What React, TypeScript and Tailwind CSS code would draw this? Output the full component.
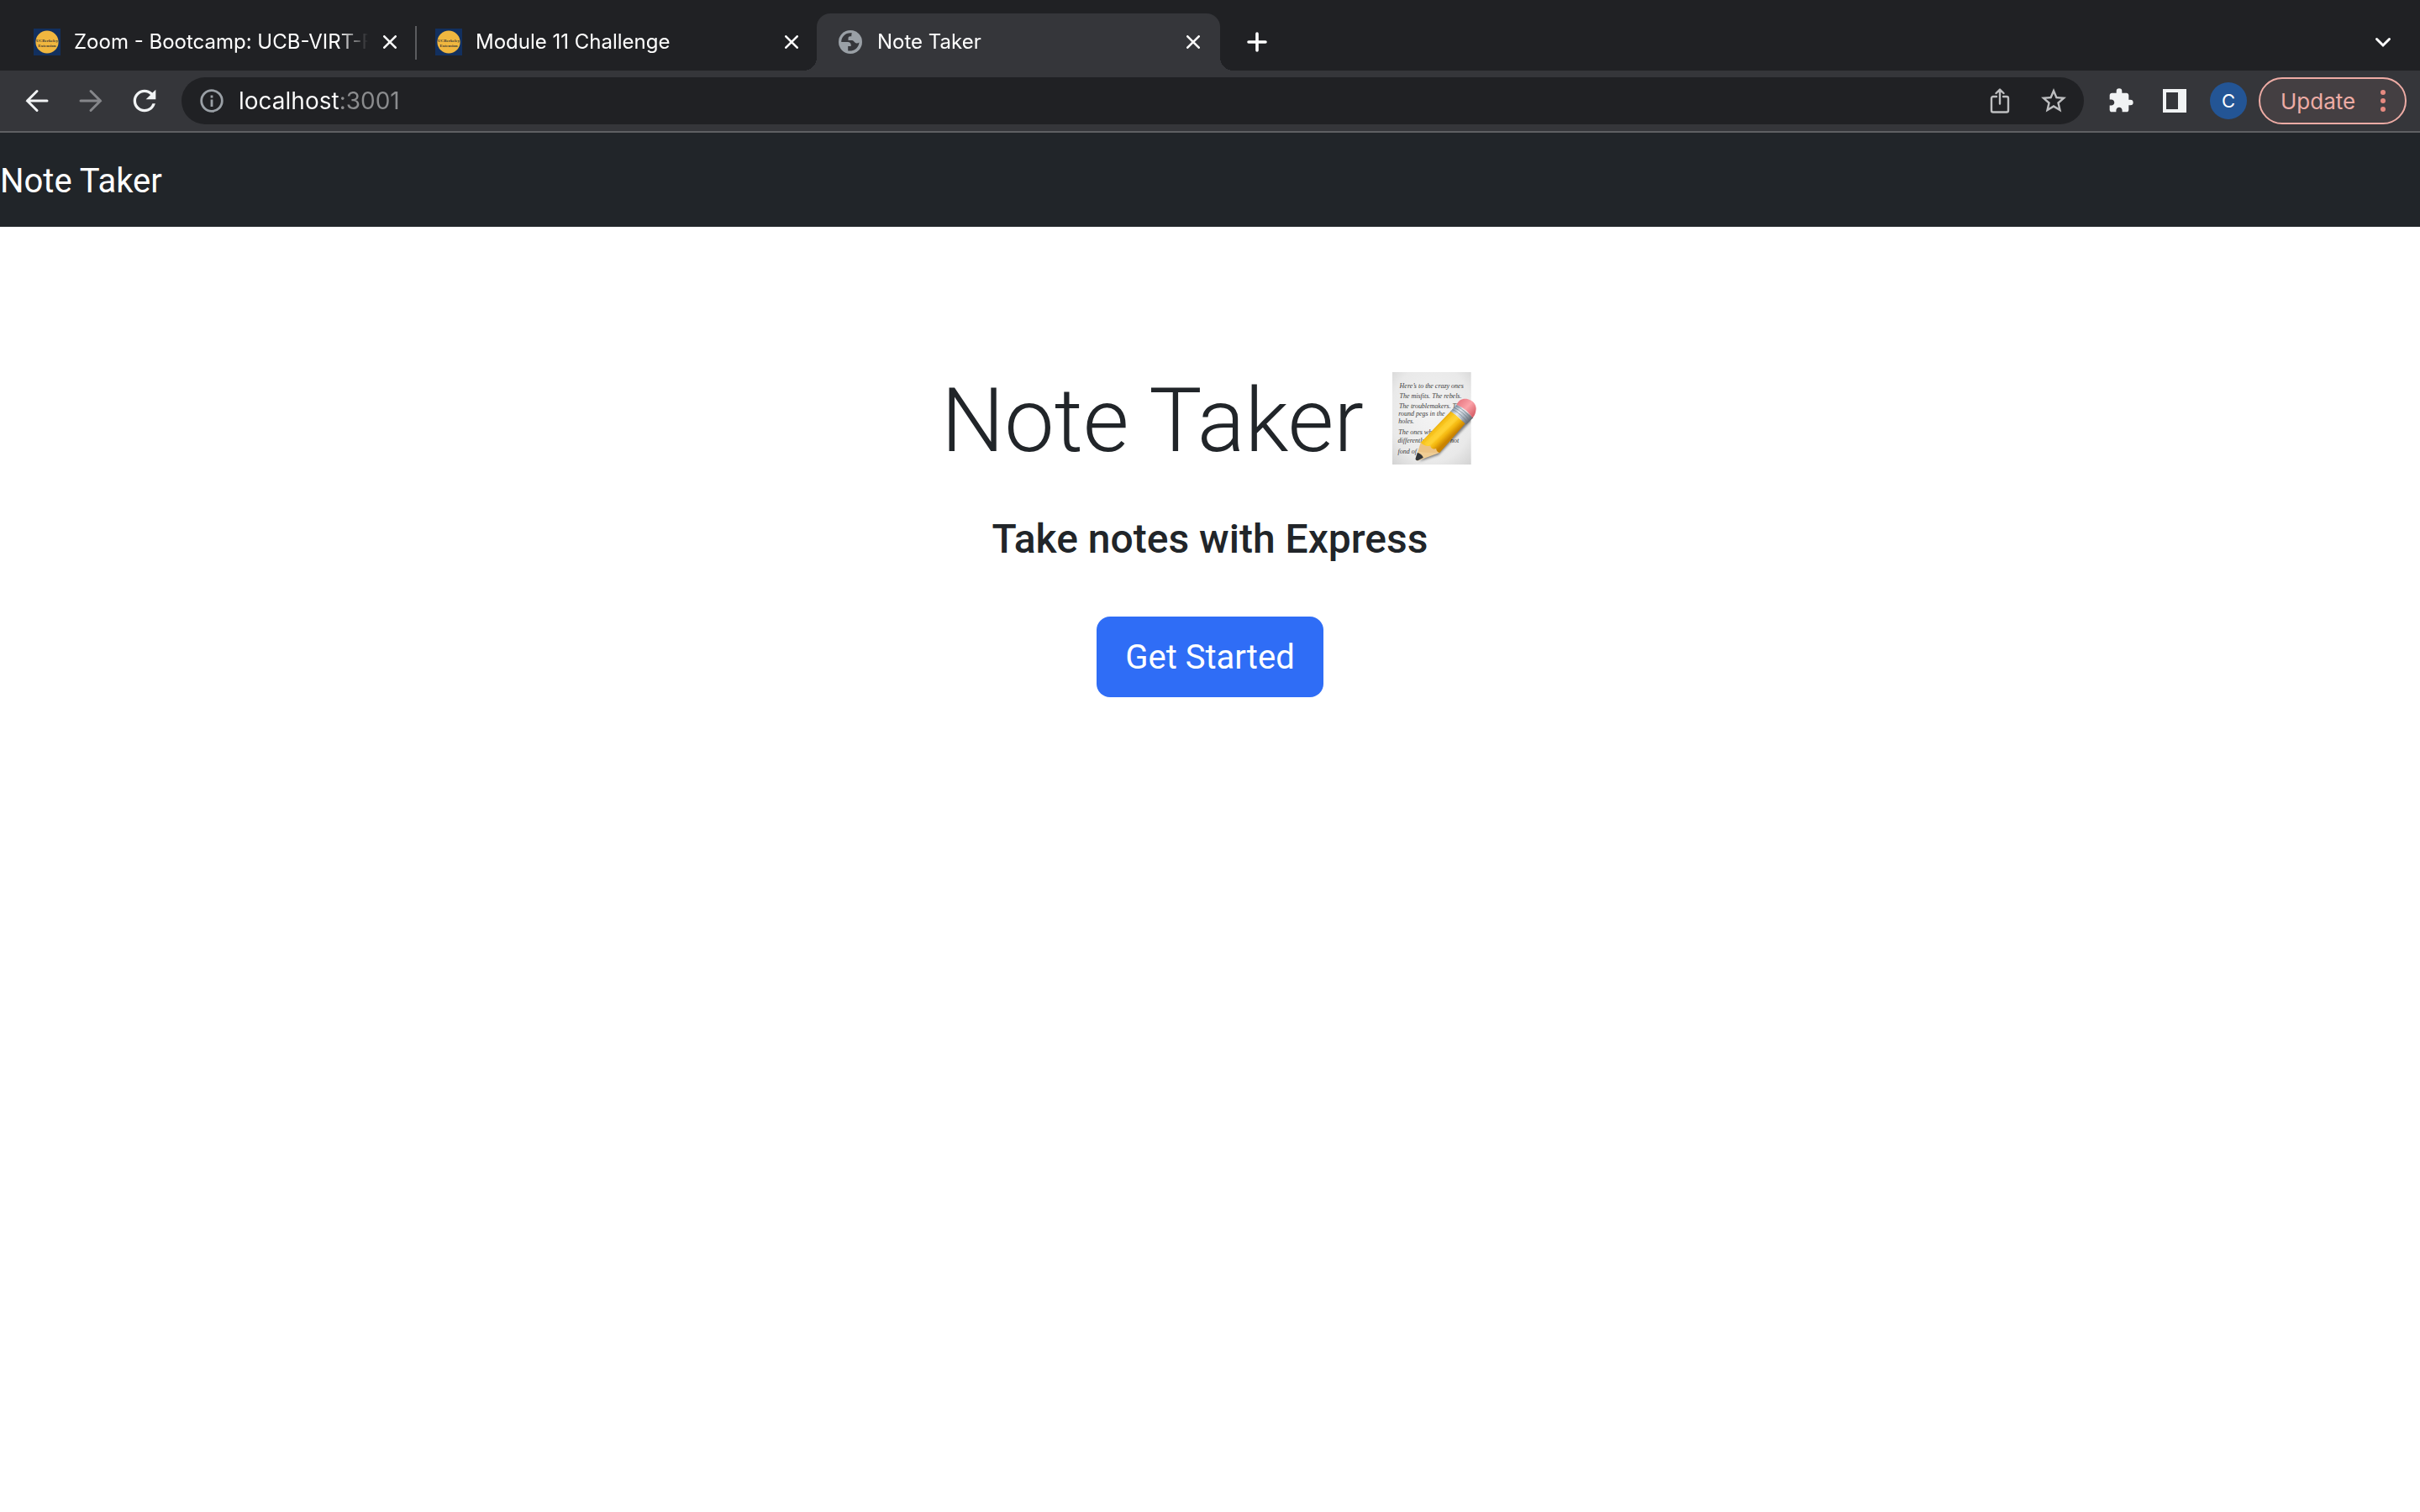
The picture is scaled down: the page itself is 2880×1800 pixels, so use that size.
import type { ReactNode } from "react";
import { MdExtension, MdRefresh, MdStarBorder } from "react-icons/md";

function BerkeleyIcon() {
  return (
    <svg viewBox="0 0 32 32" className="size-8 shrink-0" aria-hidden="true">
      <rect width="32" height="32" fill="#12305f" />
      <circle cx="16" cy="16" r="13.6" fill="#f0b73f" />
      <g fill="#3d3a35" fontFamily="Liberation Serif, serif" fontWeight="700" textAnchor="middle">
        <text x="16" y="16" fontSize="5">UCBerkeley</text>
        <text x="16" y="22" fontSize="5">Extension</text>
      </g>
    </svg>
  );
}

function GlobeIcon() {
  return (
    <svg viewBox="0 0 32 32" className="size-8 shrink-0" aria-hidden="true">
      <circle cx="16" cy="16" r="14" fill="#9aa0a6" />
      <path
        d="M16.5 5.2C10 5 5.300 9.800 5.200 16H13c2.200 0 3.700 1.500 3.700 3.500v1.500h-3.500v5.400c6.500 1.300 12.800-3.400 13.300-10-1.300 1.200-2.800 1.200-4 .8-2-.6-2.300-2.800-4.300-3.200h-4.700v-2.600c0-1.400 1-2.200 2.500-2.200h1.300V7.800c0-1 .3-1.800.7-2.400z"
        fill="#35363a"
      />
    </svg>
  );
}

function CloseIcon() {
  return (
    <svg viewBox="0 0 16 16" className="size-4" fill="none" stroke="#fff" strokeWidth="2.600" strokeLinecap="round" aria-hidden="true">
      <path d="M1.300 1.300l13.400 13.400M14.700 1.300L1.300 14.700" />
    </svg>
  );
}

function Tab({ icon, title, active, divider }: { icon: ReactNode; title: string; active?: boolean; divider?: boolean }) {
  return (
    <div
      className={
        active
          ? "relative flex h-[68px] w-[480px] items-center rounded-t-2xl bg-[#35363a] pl-6 pr-6"
          : "relative flex h-[68px] w-[478px] items-center pl-6 pr-[22px]"
      }
    >
      {active && (
        <>
          <span className="absolute -left-4 bottom-0 size-4 bg-[radial-gradient(circle_at_0_0,transparent_16px,#35363a_16px)]" />
          <span className="absolute -right-4 bottom-0 size-4 bg-[radial-gradient(circle_at_100%_0,transparent_16px,#35363a_16px)]" />
        </>
      )}
      {divider && <span className="absolute right-[-2px] top-[15px] h-10 w-[2px] bg-[#5b5c5f]" />}
      <button type="button" role="tab" aria-selected={!!active} className="flex min-w-0 flex-1 items-center gap-4">
        {icon}
        <span className="min-w-0 flex-1 whitespace-nowrap text-left text-[24px] leading-8 text-white [mask-image:linear-gradient(90deg,#000_calc(100%-36px),transparent)]">
          {title}
        </span>
      </button>
      <button type="button" aria-label={`Close ${title}`} className="ml-[18px]">
        <CloseIcon />
      </button>
    </div>
  );
}

function TabStrip() {
  return (
    <div className="flex h-[84px] items-end bg-[#202124] pl-4 pr-[34px]">
      <div role="tablist" className="flex">
        <Tab icon={<BerkeleyIcon />} title="Zoom - Bootcamp: UCB-VIRT-F" divider />
        <Tab icon={<BerkeleyIcon />} title="Module 11 Challenge" />
        <Tab icon={<GlobeIcon />} title="Note Taker" active />
      </div>
      <button type="button" aria-label="New tab" className="ml-8 flex h-[68px] items-center">
        <svg viewBox="0 0 24 24" className="size-6" fill="none" stroke="#fff" strokeWidth="3.600" strokeLinecap="round" aria-hidden="true">
          <path d="M12 2v20M2 12h20" />
        </svg>
      </button>
      <button type="button" aria-label="Search tabs" className="ml-auto flex h-[68px] items-center">
        <svg viewBox="0 0 20 20" className="size-5" fill="none" stroke="#fff" strokeWidth="3" strokeLinecap="round" aria-hidden="true">
          <path d="M2.500 6.500L10 14l7.500-7.500" />
        </svg>
      </button>
    </div>
  );
}

function Toolbar() {
  return (
    <div className="flex h-[74px] items-center border-b-2 border-[#5f6063] bg-[#35363a] pl-7 pr-4">
      <div className="flex w-[188px] items-center gap-8">
        <button type="button" aria-label="Back">
          <svg viewBox="0 0 32 32" className="size-8" fill="none" stroke="#f1f3f4" strokeWidth="3" strokeLinecap="round" aria-hidden="true">
            <path d="M28 16H4.500M16 4.500L4.500 16 16 27.500" />
          </svg>
        </button>
        <button type="button" aria-label="Forward" disabled>
          <svg viewBox="0 0 32 32" className="size-8" fill="none" stroke="#85868a" strokeWidth="3" strokeLinecap="round" aria-hidden="true">
            <path d="M4 16h23.500M16 4.500L27.500 16 16 27.500" />
          </svg>
        </button>
        <button type="button" aria-label="Reload" className="-ml-1">
          <MdRefresh className="size-10 text-[#f1f3f4]" />
        </button>
      </div>
      <div className="flex h-14 flex-1 items-center rounded-full bg-[#202124] pl-[22px] pr-[18px]">
        <svg viewBox="0 0 28 28" className="size-7" fill="none" stroke="#9aa0a6" strokeWidth="2.800" aria-hidden="true">
          <circle cx="14" cy="14" r="12.300" />
          <path d="M14 12.500v8.500M14 7.500v3" />
        </svg>
        <input
          type="text"
          aria-label="Address"
          defaultValue="localhost:3001"
          className="ml-[18px] min-w-0 flex-1 bg-[linear-gradient(90deg,#fff_119px,#8b8c8e_119px)] bg-clip-text text-[28px] leading-10 text-transparent outline-none"
        />
        <button type="button" aria-label="Share">
          <svg viewBox="0 0 24 30" className="h-[30px] w-6" fill="none" stroke="#bdbec0" strokeWidth="2.400" strokeLinecap="round" strokeLinejoin="round" aria-hidden="true">
            <path d="M8 10H4a2 2 0 0 0-2 2v14.500a2 2 0 0 0 2 2h16a2 2 0 0 0 2-2V12a2 2 0 0 0-2-2h-4M12 18.500V2M7.500 6L12 1.600 16.500 6" />
          </svg>
        </button>
        <button type="button" aria-label="Bookmark this tab" className="ml-[34px]">
          <MdStarBorder className="size-9 text-[#bdbec0]" />
        </button>
      </div>
      <button type="button" aria-label="Extensions" className="ml-7">
        <MdExtension className="size-8 text-[#f1f3f4]" />
      </button>
      <button type="button" aria-label="Side panel" className="ml-[34px]">
        <svg viewBox="0 0 28 28" className="size-7" aria-hidden="true">
          <path d="M0 0h28v28H0zM4 4v20h14V4z" fill="#f1f3f4" fillRule="evenodd" />
        </svg>
      </button>
      <button type="button" aria-label="Profile" className="ml-7 size-11 rounded-full bg-[#235595] text-[22px] text-white">
        C
      </button>
      <button
        type="button"
        className="ml-[14px] flex h-14 w-44 items-center justify-between rounded-full border-2 border-[#eeaca5] bg-[#443f42] pl-6 pr-[23px] text-[26px] text-[#eeaca5]"
      >
        Update
        <svg viewBox="0 0 6 28" className="h-7 w-[6px]" fill="#e68a80" aria-hidden="true">
          <circle cx="3" cy="4" r="3" />
          <circle cx="3" cy="14" r="3" />
          <circle cx="3" cy="24" r="3" />
        </svg>
      </button>
    </div>
  );
}

function MemoIcon() {
  return (
    <svg viewBox="36 60 340 340" className="size-[113px]" role="img" aria-label="Memo">
      <defs>
        <radialGradient id="paper" cx="0.5" cy="0.45" r="0.75">
          <stop offset="0" stopColor="#f4f4f4" />
          <stop offset="0.7" stopColor="#e9e9e9" />
          <stop offset="1" stopColor="#d2d2d2" />
        </radialGradient>
        <linearGradient id="body" gradientUnits="userSpaceOnUse" x1="222" y1="250" x2="272" y2="302">
          <stop offset="0" stopColor="#d99a08" />
          <stop offset="0.2" stopColor="#f6c018" />
          <stop offset="0.5" stopColor="#ffd030" />
          <stop offset="0.72" stopColor="#f4b80f" />
          <stop offset="1" stopColor="#c98300" />
        </linearGradient>
        <linearGradient id="metal" gradientUnits="userSpaceOnUse" x1="282" y1="195" x2="336" y2="245">
          <stop offset="0" stopColor="#8296a8" />
          <stop offset="0.35" stopColor="#e4eaf0" />
          <stop offset="0.65" stopColor="#aeb8c2" />
          <stop offset="1" stopColor="#6b7077" />
        </linearGradient>
        <linearGradient id="rubber" gradientUnits="userSpaceOnUse" x1="305" y1="170" x2="362" y2="225">
          <stop offset="0" stopColor="#e97b85" />
          <stop offset="0.45" stopColor="#fba3a9" />
          <stop offset="1" stopColor="#d3555f" />
        </linearGradient>
        <filter id="soft" x="-20%" y="-20%" width="140%" height="140%">
          <feGaussianBlur stdDeviation="5" />
        </filter>
        <clipPath id="sheet">
          <rect x="66" y="66" width="282" height="331" />
        </clipPath>
      </defs>
      <rect x="66" y="66" width="282" height="331" fill="url(#paper)" />
      <g fill="#3c3c3c" fontFamily="Liberation Serif, serif" fontStyle="italic" fontSize="24">
        <text x="92" y="123">Here’s to the crazy ones</text>
        <text x="92" y="160">The misfits. The rebels.</text>
        <text x="90" y="195">The troublemakers. The</text>
        <text x="88" y="224">round pegs in the</text>
        <text x="88" y="250">holes.</text>
        <text x="88" y="288">The ones who see</text>
        <text x="86" y="319">differently. They’re not</text>
        <text x="86" y="358">fond of</text>
      </g>
      <path d="M162 386L232 362 350 238 340 214 220 330z" fill="#000" opacity="0.5" filter="url(#soft)" clipPath="url(#sheet)" />
      <path d="M168 318L150 372c-1 8 3 12 9 11l76-28-12-40-30-20z" fill="#f0cd94" />
      <path d="M168 318l-10 32 26 4 51 1-12-30z" fill="#e9bd7b" opacity="0.6" />
      <path d="M156 354l-7 22c0 6 5 8 10 6l18-10c-3-8-12-15-21-18z" fill="#33363a" />
      <path d="M168 318L276 205l51 45-92 105c-7-2-11-6-12-15-11 3-19 0-21-11-11 4-26 0-34-11z" fill="url(#body)" />
      <path d="M182 320L289 216l17 14-104 99c-8 2-15-3-20-9z" fill="#ffd83c" opacity="0.4" />
      <path d="M223 340L322 246" stroke="#d79309" strokeWidth="2.500" />
      <path d="M274 207l24-26 58 48-26 25c-16-20-34-36-56-47z" fill="url(#metal)" />
      <path d="M281 200c20 9 39 26 54 46M287 193c21 10 40 25 55 46M293 186c21 10 42 27 56 46" fill="none" stroke="#66727f" strokeWidth="2.500" opacity="0.75" />
      <path d="M297 183c6-18 22-24 40-20 17 4 30 19 29 35-1 14-5 25-13 32-12-21-33-38-56-47z" fill="url(#rubber)" />
    </svg>
  );
}

export default function App() {
  return (
    <div className="min-h-screen bg-white font-['Inter',sans-serif] text-[#212529]">
      <header>
        <TabStrip />
        <Toolbar />
      </header>
      <nav className="flex h-28 items-center bg-[#212529] pt-[3px] font-['Roboto','Inter',sans-serif]">
        <a href="#home" className="text-[40px] leading-[60px] text-white">
          Note Taker
        </a>
      </nav>
      <main className="flex flex-col items-center pt-40 font-['Roboto','Inter',sans-serif]">
        <h1 className="flex h-[134px] items-center gap-6 text-[106px] font-light leading-[120px]">
          <span className="pt-2">Note Taker</span>
          <MemoIcon />
        </h1>
        <h4 className="mt-12 text-[48px] font-medium leading-[60px]">Take notes with Express</h4>
        <a
          href="#notes"
          className="mt-[62px] flex h-24 w-[270px] items-center justify-center rounded-2xl bg-[#2f6df6] pt-[2px] text-[40px] leading-[60px] text-white"
        >
          Get Started
        </a>
      </main>
    </div>
  );
}
